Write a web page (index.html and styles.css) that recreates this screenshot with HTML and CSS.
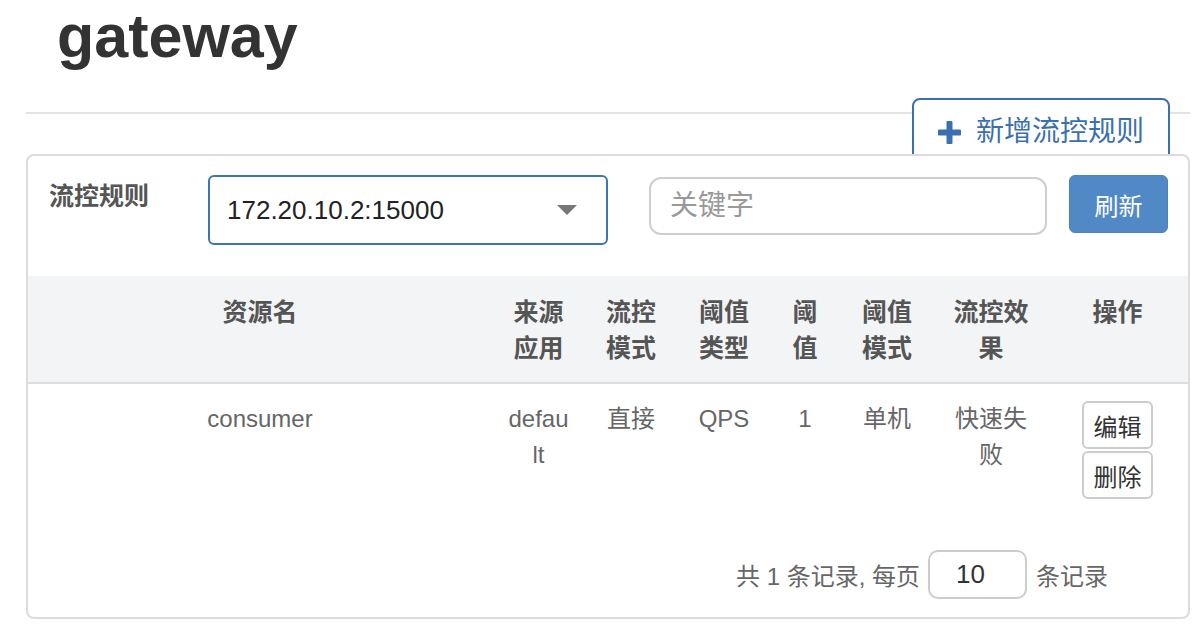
FILE: index.html
```html
<!DOCTYPE html>
<html lang="zh-CN">
<head>
<meta charset="utf-8">
<title>gateway - 流控规则</title>
<link rel="stylesheet" href="styles.css">
</head>
<body>
<div class="page">
  <div class="page-head">
    <h1 class="title">gateway</h1>
    <hr class="divider">
  </div>
  <div class="actions">
    <button class="btn-add" type="button">
      <svg class="icon-plus" width="23" height="23" viewBox="0 0 23 23" aria-hidden="true">
        <rect x="0" y="8.5" width="23" height="6" rx="1"/>
        <rect x="8.5" y="0" width="6" height="23" rx="1"/>
      </svg>
      <span>新增流控规则</span>
    </button>
  </div>
  <div class="card">
    <div class="filter">
      <label class="filter-label">流控规则</label>
      <div class="select">
        <span class="select-value">172.20.10.2:15000</span>
        <span class="caret"></span>
      </div>
      <input class="search" type="text" placeholder="关键字">
      <button class="btn-refresh" type="button">刷新</button>
    </div>
    <table class="rules">
      <colgroup>
        <col class="c-name">
        <col class="c-app">
        <col class="c-mode">
        <col class="c-type">
        <col class="c-val">
        <col class="c-cluster">
        <col class="c-effect">
        <col class="c-ops">
      </colgroup>
      <thead>
        <tr>
          <th>资源名</th>
          <th>来源应用</th>
          <th>流控模式</th>
          <th>阈值类型</th>
          <th>阈值</th>
          <th>阈值模式</th>
          <th>流控效果</th>
          <th>操作</th>
        </tr>
      </thead>
      <tbody>
        <tr>
          <td>consumer</td>
          <td>default</td>
          <td>直接</td>
          <td>QPS</td>
          <td>1</td>
          <td>单机</td>
          <td>快速失败</td>
          <td class="ops">
            <button class="btn-op" type="button">编辑</button>
            <button class="btn-op" type="button">删除</button>
          </td>
        </tr>
      </tbody>
    </table>
    <div class="pager">
      <span>共 1 条记录, 每页</span>
      <input class="page-size" type="text" value="10">
      <span>条记录</span>
    </div>
  </div>
</div>
</body>
</html>
```

FILE: styles.css
```css
* { box-sizing: border-box; }

html, body {
  margin: 0;
  background: #fff;
}

body {
  font-family: "Liberation Sans", "Noto Sans CJK SC", sans-serif;
  color: #333;
}

.page {
  padding: 0 14px 0 26px;
}

.title {
  margin: 3px 0 0 31px;
  font-size: 61px;
  line-height: 66px;
  font-weight: 700;
  color: #333;
}

.divider {
  margin: 43px 0 0;
  height: 0;
  border: 0;
  border-top: 2px solid #e3e3e3;
}

.actions {
  display: flex;
  justify-content: flex-end;
  margin-top: -16px;
  padding-right: 20px;
}

.btn-add {
  display: inline-flex;
  align-items: center;
  gap: 15px;
  height: 68px;
  padding: 0 24px 0 24px;
  border: 2px solid #3a70b0;
  border-radius: 8px;
  background: #fff;
  color: #3a70b0;
  font-family: inherit;
  font-size: 28px;
  line-height: 1;
  cursor: pointer;
}

.icon-plus {
  fill: #3a70b0;
  flex: none;
}

.card {
  position: relative;
  margin-top: -12px;
  background: #fff;
  border: 2px solid #dcdcdc;
  border-radius: 8px;
}

.filter {
  display: flex;
  align-items: flex-start;
  height: 120px;
  padding: 0 20px 0 21px;
}

.filter-label {
  width: 159px;
  margin-top: 22px;
  font-size: 25px;
  line-height: 36px;
  font-weight: 700;
  color: #555;
}

.select {
  display: flex;
  align-items: center;
  justify-content: space-between;
  width: 400px;
  height: 70px;
  margin-top: 19px;
  padding: 0 29px 0 17px;
  border: 2px solid #3d74b5;
  border-radius: 6px;
  font-size: 26px;
  color: #222;
}

.caret {
  width: 0;
  height: 0;
  border-left: 10.5px solid transparent;
  border-right: 10.5px solid transparent;
  border-top: 10px solid #777;
}

.search {
  width: 398px;
  height: 58px;
  margin: 21px 0 0 41px;
  padding: 0 0 0 19px;
  border: 2px solid #cfcfcf;
  border-radius: 12px;
  font-family: inherit;
  font-size: 28px;
  color: #333;
  outline: none;
}

.search::placeholder {
  color: #999;
}

.btn-refresh {
  width: 99px;
  height: 58px;
  margin: 19px 0 0 22px;
  border: 1px solid #4b82bf;
  border-radius: 6px;
  background: #5189c6;
  color: #fff;
  font-family: inherit;
  font-size: 24px;
  cursor: pointer;
}

.rules {
  width: 100%;
  border-collapse: collapse;
  table-layout: fixed;
}

.c-name { width: 464px; }
.c-app { width: 93px; }
.c-mode { width: 92px; }
.c-type { width: 94px; }
.c-val { width: 68px; }
.c-cluster { width: 96px; }
.c-effect { width: 112px; }
.c-ops { width: 141px; }

.rules th {
  padding: 18px 16px 16px;
  background: #f3f4f6;
  border-bottom: 2px solid #dddddd;
  font-size: 25px;
  line-height: 36px;
  font-weight: 700;
  color: #555;
  text-align: center;
  vertical-align: top;
}

.rules td {
  padding: 17px 16px 17px;
  font-size: 24px;
  line-height: 36px;
  color: #666;
  text-align: center;
  vertical-align: top;
  word-break: break-all;
}

.rules td.ops {
  padding-left: 0;
  padding-right: 0;
}

.btn-op {
  display: block;
  width: 71px;
  height: 48px;
  margin: 0 auto 2px;
  padding: 0;
  border: 2px solid #cccccc;
  border-radius: 6px;
  background: #fff;
  color: #333;
  font-family: inherit;
  font-size: 24px;
  cursor: pointer;
}

.pager {
  display: flex;
  justify-content: flex-end;
  align-items: center;
  padding: 32px 80px 18px 0;
  font-size: 24px;
  color: #666;
}

.page-size {
  width: 99px;
  height: 49px;
  margin: 0 9px 0 8px;
  padding: 0 0 0 26px;
  border: 2px solid #cccccc;
  border-radius: 10px;
  font-family: inherit;
  font-size: 26px;
  color: #333;
  outline: none;
}
```
